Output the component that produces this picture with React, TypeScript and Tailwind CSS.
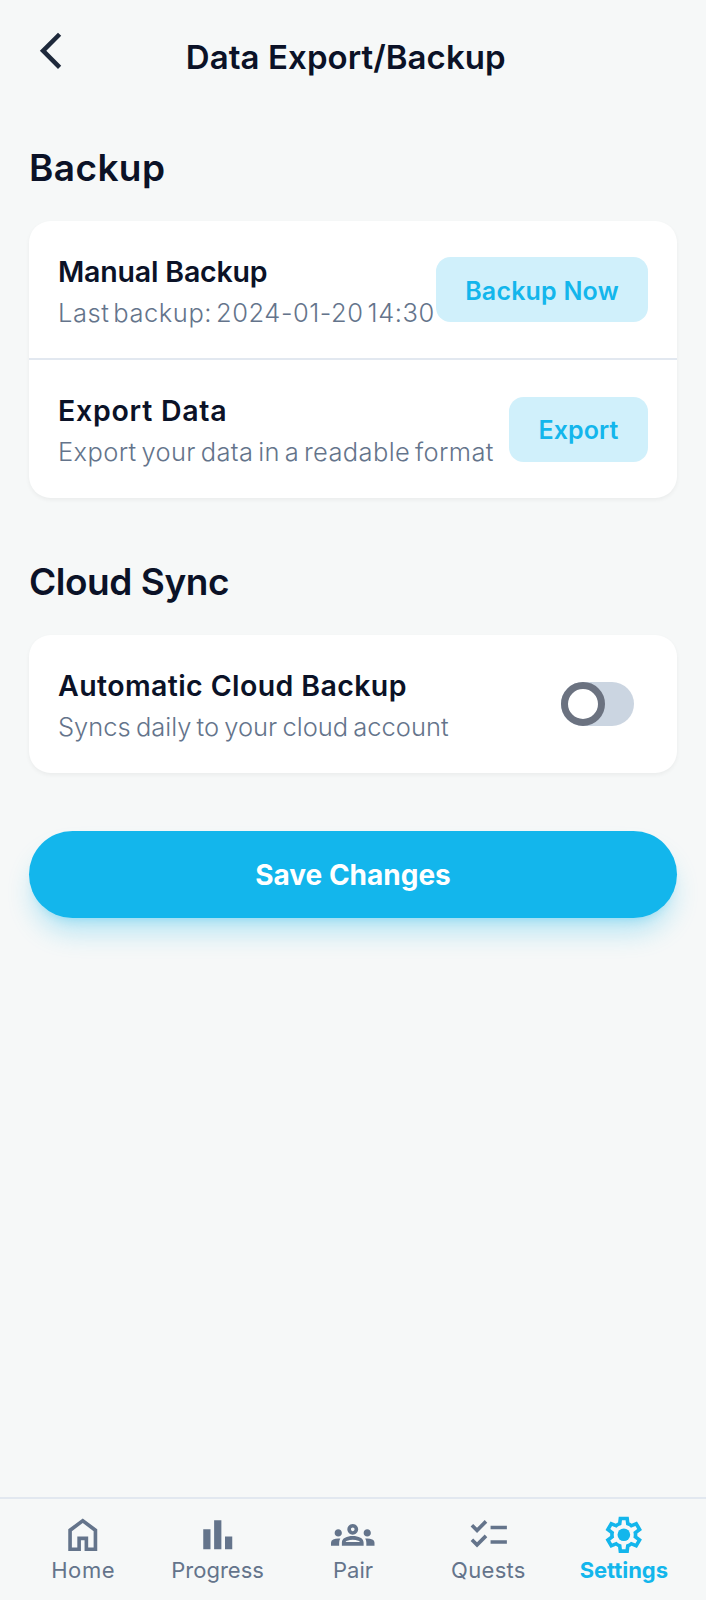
import type { ReactNode } from "react";
import { MdChecklist, MdOutlineGroups } from "react-icons/md";

function Symbol({ children }: { children: ReactNode }) {
  return (
    <svg viewBox="0 -960 960 960" fill="currentColor" className="size-[43.5px]">
      {children}
    </svg>
  );
}

function SectionTitle({ className, children }: { className: string; children: ReactNode }) {
  return <h2 className={`text-[37px] leading-[50px] font-semibold ${className}`}>{children}</h2>;
}

interface RowProps {
  title: string;
  titleClass: string;
  text: string;
  textClass: string;
  children: ReactNode;
}

function Row({ title, titleClass, text, textClass, children }: RowProps) {
  return (
    <div className="flex h-[137.4px] items-center justify-between px-[29px]">
      <div className="whitespace-nowrap">
        <p className={`text-[28.5px] leading-[43px] font-semibold ${titleClass}`}>{title}</p>
        <p className={`pt-[2px] text-[25.5px] leading-[35px] font-light text-[#64748b] ${textClass}`}>{text}</p>
      </div>
      {children}
    </div>
  );
}

function NavItem({ label, className, children }: { label: string; className: string; children: ReactNode }) {
  return (
    <a className={`flex flex-1 flex-col items-center ${className}`}>
      {children}
      <span className="pt-px text-[22px] leading-[27px]">{label}</span>
    </a>
  );
}

export default function App() {
  return (
    <div className="flex h-[1600px] w-[706px] flex-col bg-[#f6f8f8] font-['Inter',sans-serif] text-[#0b1227]">
      <header className="flex h-[101px] items-start px-[29px] pt-[28.5px]">
        <button className="text-[#1e293b]">
          <Symbol>
            <path d="M640-80 240-480l400-400 71 71-329 329 329 329-71 71Z" />
          </Symbol>
        </button>
        <h1 className="flex-1 pt-[7px] pr-[58px] text-center text-[33px] leading-[42px] font-semibold tracking-[0.07px]">
          Data Export/Backup
        </h1>
      </header>

      <main className="flex-1 px-[29px] pt-[42px]">
        <SectionTitle className="tracking-[0.4px]">Backup</SectionTitle>
        <section className="mt-[28px] rounded-[21.75px] bg-white shadow-[0_2px_4px_rgba(0,0,0,0.05)]">
          <Row
            title="Manual Backup"
            titleClass="tracking-[-0.18px]"
            text="Last backup: 2024-01-20 14:30"
            textClass="tracking-[0.54px] [word-spacing:-3.7px]"
          >
            <button className="h-[65px] w-[212px] rounded-[14.5px] bg-[#d0f0fb] pt-[4px] text-[25px] font-semibold tracking-[0.2px] whitespace-nowrap text-[#13b6ec]">
              Backup Now
            </button>
          </Row>
          <div className="h-[2px] bg-[#e2e8f0]" />
          <Row
            title="Export Data"
            titleClass="tracking-[0.75px]"
            text="Export your data in a readable format"
            textClass="tracking-[0.37px] [word-spacing:-2.7px]"
          >
            <button className="h-[65px] w-[139px] rounded-[14.5px] bg-[#d0f0fb] pt-[3px] text-[25px] font-semibold tracking-[0.08px] text-[#13b6ec]">
              Export
            </button>
          </Row>
        </section>

        <SectionTitle className="mt-[59px] tracking-[-0.45px]">Cloud Sync</SectionTitle>
        <section className="mt-[28.5px] rounded-[21.75px] bg-white shadow-[0_2px_4px_rgba(0,0,0,0.05)]">
          <Row
            title="Automatic Cloud Backup"
            titleClass="tracking-[0.4px]"
            text="Syncs daily to your cloud account"
            textClass="[word-spacing:-2px]"
          >
            <button role="switch" aria-checked="false" className="mr-[14.5px] flex h-[43.5px] w-[72.5px] rounded-full bg-[#cbd5e1]">
              <span className="size-[43.5px] rounded-full border-[7.25px] border-[#6b7280] bg-white" />
            </button>
          </Row>
        </section>

        <button className="mt-[58px] h-[87px] w-full rounded-full bg-[#13b6ec] pt-px text-[28px] font-bold text-white shadow-[0_18px_27px_-5px_rgba(19,182,236,0.3),0_7px_11px_-7px_rgba(19,182,236,0.3)]">
          Save Changes
        </button>
      </main>

      <nav className="flex h-[103px] border-t-2 border-[#e2e8f0] px-[14.5px] pt-[13.5px] text-[#64748b]">
        <NavItem label="Home" className="pl-px tracking-[0.6px]">
          <Symbol>
            <path d="M240-200h120v-240h240v240h120v-360L480-740 240-560v360Zm-80 80v-480l320-240 320 240v480H520v-240h-80v240H160Z" />
          </Symbol>
        </NavItem>
        <NavItem label="Progress" className="-ml-px">
          <Symbol>
            <path d="M640-160v-280h160v280H640Zm-240 0v-640h160v640H400Zm-240 0v-440h160v440H160Z" />
          </Symbol>
        </NavItem>
        <NavItem label="Pair" className="">
          <MdOutlineGroups className="size-[43.5px]" />
        </NavItem>
        <NavItem label="Quests" className="tracking-[0.3px]">
          <MdChecklist className="size-[43.5px]" />
        </NavItem>
        <NavItem label="Settings" className="font-bold tracking-[-0.05px] text-[#13b6ec]">
          <Symbol>
            <path d="m370-80-16-128q-13-5-24.5-12T307-235l-119 50L78-375l103-78q-1-7-1-13.5v-27q0-6.5 1-13.5L78-585l110-190 119 50q11-8 23-15t24-12l16-128h220l16 128q13 5 24.5 12t22.5 15l119-50 110 190-103 78q1 7 1 13.5v27q0 6.5-2 13.5l103 78-110 190-118-50q-11 8-23 15t-24 12L590-80H370Zm70-80h79l14-106q31-8 57.5-23.5T639-327l99 41 39-68-86-65q5-14 7-29.5t2-31.5q0-16-2-31.5t-7-29.5l86-65-39-68-99 42q-22-23-48.5-38.5T533-694l-13-106h-79l-14 106q-31 8-57.5 23.5T321-633l-99-41-39 68 86 64q-5 15-7 30t-2 32q0 16 2 31t7 30l-86 65 39 68 99-42q22 23 48.5 38.5T427-266l13 106Z" />
            <circle cx="482" cy="-480" r="140" />
          </Symbol>
        </NavItem>
      </nav>
    </div>
  );
}
